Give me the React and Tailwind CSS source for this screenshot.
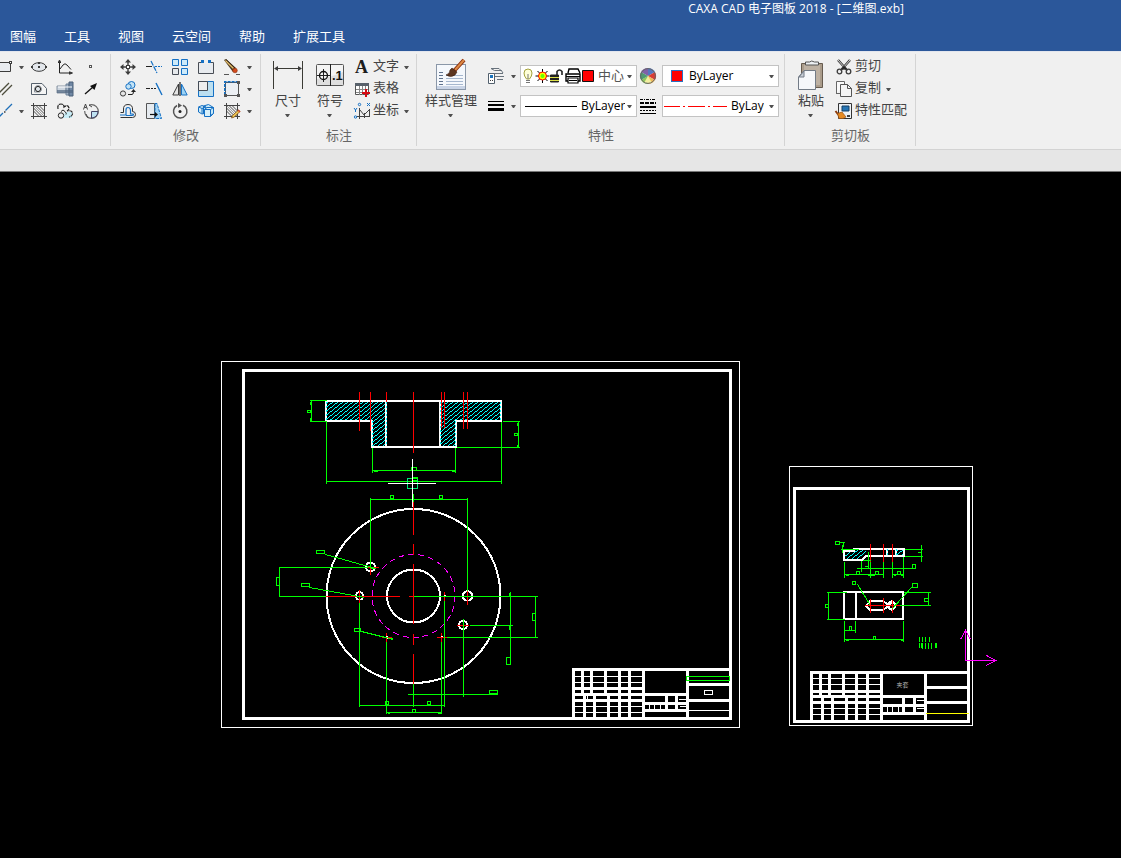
import React from "react";

const K = "#3c3c3c";
const B = "#1570c4";

function Icon({ children, className = "h-4 w-4", box = "0 0 16 16" }) {
  return (
    <svg viewBox={box} className={`shrink-0 overflow-visible ${className}`} fill="none" stroke={K} aria-hidden="true">
      {children}
    </svg>
  );
}

function Caret({ className = "" }) {
  return (
    <svg viewBox="0 0 5 3" className={`h-[3px] w-[5px] shrink-0 ${className}`} fill="#505050" aria-hidden="true">
      <path d="M0 0h5L3 3H2z" />
    </svg>
  );
}

/* ---------- tool icons ---------- */

const RectIcon = () => (
  <Icon className="h-4 w-3" box="4 0 12 16">
    <path d="M0 3.5h14.5v9H0" fill="#e8ebef" />
    <rect x="13" y="2" width="3" height="3" fill={K} stroke="none" />
    <rect x="14" y="3" width="1" height="1" fill="#fff" stroke="none" />
  </Icon>
);
const ParallelIcon = () => (
  <Icon className="h-4 w-3" box="4 0 12 16">
    <path d="M3 12 13 2M6 14 16 4" stroke="#4d4d3c" strokeWidth="1.3" />
  </Icon>
);
const CenterlineIcon = () => (
  <Icon className="h-4 w-3" box="4 0 12 16">
    <path d="M16 1 9.500 7.500M3 14l4-4" stroke="#1f6fb8" strokeWidth="1.3" />
    <path d="M8 9h1.500" stroke={K} strokeWidth="1.5" />
  </Icon>
);
const EllipseIcon = () => (
  <Icon>
    <ellipse cx="8" cy="8" rx="7" ry="4.300" fill="#e3e7ec" />
    <path d="M7 3h2v2H7zM7 7h2v2H7zM0 7h2v2H0zM14 7h2v2h-2z" fill={K} stroke="none" />
  </Icon>
);
const CurveIcon = () => (
  <Icon>
    <path d="M2.500 1v13H15M1 3.500h3M12.500 12.500v3M3 10 6 6q2-2.500 4 0l4 4.500" stroke="#222" />
    <path d="M1.500 3 2.500 1l1 2zM13 13l2.500 1L13 15z" fill="#222" />
  </Icon>
);
const PointIcon = () => (
  <Icon><rect x="6.500" y="6.500" width="2" height="2" fill="#fff" stroke="#555" /></Icon>
);
const ContourIcon = () => (
  <Icon>
    <path d="M.5 2.500h10.500l4.500 5v6H.5z" fill="#f4f4f4" stroke="#55606c" />
    <path d="M3.500 11V8A3.500 3.500 0 1 1 9 11z" stroke="#8a939c" />
    <circle cx="7" cy="8" r="2.600" fill="#dfe5ea" stroke="#222" />
  </Icon>
);
const ShaftIcon = () => (
  <Icon>
    <path d="M0 5h9v7H0z" fill="#ccd5df" stroke="#8794a3" />
    <path d="M9 3h3v11H9z" fill="#9eafc3" stroke="#6f8298" />
    <path d="M12 1h4v14h-4z" fill="#6f87a4" stroke="#4c6079" />
    <path d="M0 9h16v3H0z" fill="#50657f" stroke="none" opacity=".7" />
    <path d="M1 6h14" stroke="#fff" />
  </Icon>
);
const ArrowIcon = () => (
  <Icon>
    <path d="m2 13 8-7" stroke="#111" strokeWidth="1.300" />
    <path d="M14 2 11.500 9 7 5z" fill="#111" stroke="none" />
  </Icon>
);
const HatchIcon = ({ children }) => (
  <Icon>
    <path d="M0 2.500h16M0 13.500h16M2.500 0v16M13.500 0v16" stroke="#444" />
    <path d="m3 3 10 10M3 6l7 7M3 9l4 4M6 3l7 7M9 3l4 4M5 3l8 8M3 5l8 8M3 8l5 5M8 3l5 5" stroke="#8b8b8b" strokeWidth=".8" />
    {children}
  </Icon>
);
const SplineIcon = () => (
  <Icon>
    <path d="M8 9h7v6H6z" fill="#c9eef8" stroke="none" />
    <path d="M1 6Q0 1 4 1q3 0 3 3 4-3 5 1 0 2-2 3 5-1 5.500 2 .5 3-3.500 4" stroke="#222" strokeDasharray="4 .7" strokeWidth="1.200" />
    <path d="M4 8.500q2-3 4 0 2 2 1 3" stroke="#222" />
    <circle cx="4" cy="12.500" r="2.700" fill="#f0f0f0" stroke="#222" />
  </Icon>
);
const LocalIcon = () => (
  <Icon>
    <circle cx="8.500" cy="8.500" r="6.800" stroke="#666" strokeWidth="1.200" />
    <path d="M8.500 8.500h6.500a6.500 6.500 0 0 1-6.500 6.500z" fill="#bfe3f2" stroke="#446" />
    <path d="M0 0h6v8H0z" fill="#f0f0f0" stroke="none" />
    <path d="M.5 6.500 2.500 1l2 5.500M1.500 4.500h2M3 11l2 4M6 2l3 2" stroke="#444" />
  </Icon>
);
const MoveIcon = () => (
  <Icon>
    <path d="M8 0 5 3.500h6zM8 16l-3-3.500h6zM0 8l3.500-3v6zM16 8l-3.500-3v6z" fill={K} stroke="none" />
    <path d="M8 3v3M8 10v3M3 8h3M10 8h3" strokeWidth="1.400" />
    <rect x="6.500" y="6.500" width="3" height="3" fill="#fff" />
  </Icon>
);
const TrimIcon = () => (
  <Icon>
    <path d="m5 2 6 12" stroke={B} strokeWidth="1.200" strokeDasharray="5 1" />
    <path d="M0 7.500h6" stroke="#222" /><path d="M9 7.500h7" stroke={B} strokeDasharray="2 1" />
  </Icon>
);
const ExtendIcon = () => (
  <Icon>
    <path d="m10 2 6 12" stroke={B} strokeWidth="1.400" />
    <path d="M0 7.500h4" stroke="#222" /><path d="M5 7.500h6" stroke="#222" strokeDasharray="2 1" />
  </Icon>
);
const ArrayIcon = () => (
  <Icon>
    <path d="M.5.5h6v6h-6zM9.500.5h6v6h-6zM9.500 9.500h6v6h-6z" fill="#cdeafa" stroke={B} />
    <path d="M.5 9.500h6v6h-6z" fill="#e6e9ec" stroke="#454b55" />
  </Icon>
);
const BreakIcon = () => (
  <Icon>
    <path d="M.5 3.500h15v11H.5z" fill="#e8ebef" stroke="#484d55" />
    <path d="M6 2h5v3H6z" fill="#f0f0f0" stroke="none" />
    <path d="M3 1h3v3H3zM10 1h3v3h-3z" fill={B} stroke="none" />
  </Icon>
);
const EraserIcon = () => (
  <Icon>
    <path d="m0 1 2-1 10 9-3 4z" fill="#4b3820" stroke="none" />
    <path d="m1.500 1.500 8 8" stroke="#e3bd6b" strokeWidth="1.500" />
    <path d="M2 .5 11 9" stroke="#3a2a18" />
    <circle cx="11" cy="11.500" r="2.300" fill="#d44a1b" stroke="#8a2d0b" strokeWidth=".6" />
    <path d="M0 15.500h5M12 15.500h4" stroke="#555" />
  </Icon>
);
const CopyMoveIcon = () => (
  <Icon>
    <circle cx="11.500" cy="4" r="3.500" fill="#c3e3f5" stroke={B} />
    <circle cx="8.500" cy="5.500" r="2.700" fill="#c3e3f5" stroke={B} />
    <circle cx="3" cy="12.500" r="2.600" fill="#e6e6e6" />
    <path d="M8 13.500h4q1.500 0 1.500-3" stroke="#222" /><path d="m11 11 2.500-3 2.500 3z" fill="#222" stroke="none" />
  </Icon>
);
const MirrorIcon = () => (
  <Icon>
    <path d="M6.500 3v11H.8z" fill="#e4e4e4" /><path d="M8 1v14" strokeWidth="1.400" />
    <path d="M9.500 3v11h5.700z" fill="#9cd3f5" stroke={B} />
  </Icon>
);
const ScaleIcon = () => (
  <Icon>
    <path d="M.5.5h15v15H.5z" fill="#bcdff0" stroke={B} /><path d="M.5.5h9v9h-9z" fill="#eee" stroke="#444b55" />
  </Icon>
);
const StretchIcon = () => (
  <Icon>
    <path d="M1.500 1.500h13v13h-13z" fill="#eceff3" stroke="#555" />
    <path d="M.8 14V.8H15" stroke={B} strokeWidth="1.600" strokeDasharray="3 1" />
    <path d="M0 13h3v3H0zM13 0h3v3h-3zM13 13h3v3h-3z" fill="#555" stroke="none" />
  </Icon>
);
const OffsetIcon = () => (
  <Icon>
    <path d="M.5 9.500H3.500V7Q3 1.500 8 1.500T12.500 7v1.500q3 0 3 3t-3 3H.5" stroke="#333" />
    <path d="M0 12h6V7q0-2.500 2-2.500T10.500 7v4h2q1 0 1 .7t-2 .8H6" stroke={B} strokeWidth="1.200" />
  </Icon>
);
const ExtrudeIcon = () => (
  <Icon>
    <path d="M.5.5h8v15h-8z" fill="#e6ebf0" stroke="#555" />
    <path d="M9 .5h2l4.500 15H9z" fill="#9fd3f5" stroke={B} strokeDasharray="3 1" />
    <path d="M4 11.500h6" stroke="#111" strokeWidth="1.200" /><path d="m9 9 3 2.500L9 14z" fill="#111" stroke="none" />
  </Icon>
);
const RotateIcon = () => (
  <Icon>
    <path d="M5 2.500A6.700 6.700 0 1 0 11 2.300" stroke="#555" strokeWidth="1.500" />
    <path d="M6 0v5l4-2.500z" fill="#555" stroke="none" /><circle cx="8" cy="8.500" r="1.500" fill="#222" stroke="none" />
  </Icon>
);
const BlockIcon = () => (
  <Icon>
    <path d="M.5 4 4 2.500 8 4v6l-4 1L.5 9zM5.500 3l5-1.500 5 3v6l-3 2-7-2z" fill="#c7e8f7" stroke={B} />
    <path d="M6.500 6.500h6v7h-6zM.5 4 4 5.500V11M4 5.500 8 4M6.500 6.500 9 4.500l6.500 0-3 2M12.500 13.500l3-3" fill="#d8f0fa" stroke={B} />
  </Icon>
);
const HatchEditIcon = () => (
  <HatchIcon>
    <path d="M14.500 7 8.500 12.500 7.500 15l2.500-.8L16 8.500z" fill="#f6ce55" stroke="#7b4a16" strokeWidth=".8" />
    <path d="m14 7 2 2" stroke="#d24a2b" strokeWidth="1.500" />
  </HatchIcon>
);

/* ---------- annotation, properties and clipboard icons ---------- */

const DimensionIcon = () => (
  <Icon className="h-8 w-8" box="0 0 32 32">
    <path d="M1.500 2v28M30.500 2v28M3 9.500h26" stroke="#3b3b35" shapeRendering="crispEdges" />
    <path d="M2 9.500 6 7v5zM30 9.500 26 7v5z" fill={K} stroke="none" />
  </Icon>
);
const SymbolIcon = () => (
  <Icon className="h-8 w-8" box="0 0 32 32">
    <rect x="2.500" y="5.500" width="27" height="21" rx="1" fill="#dedede" stroke="#555" />
    <path d="M3 6h26v7q-14 6-26 7z" fill="#f4f4f4" stroke="none" />
    <path d="M16.500 5v22M3 16.500h13M9.500 10v13" stroke="#222" />
    <circle cx="9.500" cy="16.500" r="4" stroke="#111" strokeWidth="1.300" />
    <text x="18" y="21" fontSize="13" fontWeight="700" fontFamily="Liberation Sans, sans-serif" fill="#111" stroke="none">.1</text>
  </Icon>
);
const TextIcon = () => (
  <Icon>
    <text x="1" y="14" fontSize="18" fontWeight="700" fontFamily="Liberation Serif, serif" fill="#1c1c1c" stroke="none">A</text>
  </Icon>
);
const TableIcon = () => (
  <Icon>
    <path d="M1.500 2.500h13v11h-13z" fill="#fff" stroke="#555" /><path d="M1 2h14v3H1z" fill="#58616b" stroke="none" />
    <path d="M2 8.500h12M2 11.500h12M5.500 5v9M8.500 5v9M11.500 5v9" stroke="#888" />
    <path d="M12 8v8M8 12h8" stroke="#d40b13" strokeWidth="2" shapeRendering="crispEdges" />
  </Icon>
);
const CoordIcon = () => (
  <Icon>
    <path d="M5.500 5v11M3 13.500h13M6 7l4 5 5-5M10.500 15v-5M15.500 6v8" stroke="#444" />
    <path d="m0 5 1.500 2L3 5M1.500 7v2M13 0l3 3M16 0l-3 3" stroke={B} />
    <circle cx="5.500" cy="1.500" r="1.200" stroke={B} /><circle cx="1.500" cy="14" r="1.200" stroke={B} />
  </Icon>
);
const StyleIcon = () => (
  <Icon className="h-8 w-8" box="0 0 32 32">
    <rect x="1.500" y="5.500" width="29" height="25" fill="#f5f8fc" stroke="#8a97a8" />
    <path d="M2 27h28v3H2z" fill="#c9d4e6" stroke="none" />
    <path d="M4 13.500h4M4 16.500h4M4 19.500h4M4 22.500h4M4 25.500h4" stroke="#5f728d" />
    <path d="M11 16.500h17M11 19.500h17M11 22.500h17M11 25.500h17" stroke="#a6b7ce" />
    <path d="M29 1 19 12" stroke="#8a2f0f" strokeWidth="4" /><path d="M29 1 20 11" stroke="#dd8a45" strokeWidth="2" />
    <path d="m17 9 5 4-2 3q-4 3-9 0 4-1 4-5z" fill="#5c3520" stroke="#3d2012" strokeWidth=".6" />
  </Icon>
);
const LayerToolIcon = () => (
  <Icon>
    <path d="M3 .5h8l2 2H6.500zM6 5.500h9M7 8.500h9M9 11.500h6M13 2l2 3" stroke="#68727c" />
    <path d="M.5 5.500h6v10h-6z" fill="#fff" stroke="#52606d" /><path d="M2 7h3v3H2z" fill="#1973bd" stroke="none" />
    <path d="M2 12.500h1M4 12.500h1" />
  </Icon>
);
const LineWeightIcon = () => (
  <Icon><path d="M0 3h16v1H0zM0 6h16v2H0zM0 10h16v3H0z" fill="#000" stroke="none" shapeRendering="crispEdges" /></Icon>
);
const LineTypeIcon = () => (
  <Icon>
    <g stroke="#000" shapeRendering="crispEdges">
      <path d="M0 1.500h16" strokeDasharray="3 1 1 1" />
      <path d="M0 5h16" strokeWidth="2" strokeDasharray="4 1" /><path d="M0 9h16" strokeWidth="2" />
      <path d="M0 12.500h16" strokeDasharray="2 1" /><path d="M0 15.500h16" />
    </g>
  </Icon>
);
const ColorWheelIcon = () => (
  <Icon>
    <g stroke="none">
      <path d="M8 8V0a8 8 0 0 1 7 4z" fill="#5478c0" /><path d="M8 8 8 0a8 8 0 0 0-7 4z" fill="#8060a8" />
      <path d="M8 8 15 4a8 8 0 0 1 0 8z" fill="#d83c35" /><path d="M8 8 15 12a8 8 0 0 1-7 4z" fill="#edb95b" />
      <path d="M8 8v8a8 8 0 0 1-7-4z" fill="#8dc75d" /><path d="M8 8 1 12a8 8 0 0 1 0-8z" fill="#4f9a72" />
      <path d="M8 8 4 15h8z" fill="#f2eea0" />
    </g>
    <circle cx="8" cy="8" r="7.400" stroke="#666" />
  </Icon>
);
const LayerStateIcon = () => (
  <Icon className="h-4 w-[71px]" box="0 0 71 16">
    <path d="M3.500 11Q1 8 1 5q0-4 4-4t4 4q0 3-2.500 6z" fill="#ffffd8" stroke="#a3a13c" />
    <path d="M3 12.500h4M3 14.500h4M5 6v5" stroke="#777" />
    <path d="M19.500 1v14M12.500 8h14M14.500 3l10 10M24.500 3l-10 10" stroke="#000" />
    <circle cx="19.500" cy="8" r="4" fill="#ff0" stroke="#f00" /><circle cx="19.500" cy="8" r="2" fill="#6f0" stroke="none" />
    <path d="M27.500 7h8v7h-8z" fill="#222" stroke="#222" />
    <path d="M34 7V3.500q2.500-3 5 0V7" stroke="#222" strokeWidth="1.600" />
    <path d="M27 9.500h9M27 12.500h9" stroke="#dce14a" />
    <path d="M45 5 46 1h9l2 4M43 6h14v7H43z" fill="#fff" stroke="#000" strokeWidth="1.400" />
    <path d="M45 10h10v5H45z" fill="#fff" stroke="#000" strokeWidth="1.200" /><path d="M46 12.500h8M43 8.500h14" stroke="#000" />
    <path d="M59.500 2.500h11v11h-11z" fill="#f00" stroke="#111" />
  </Icon>
);
const PasteIcon = () => (
  <Icon className="h-8 w-8" box="0 0 32 32">
    <path d="M6.500 4.500h21v24h-21z" fill="#aa9c8b" stroke="#665b4f" />
    <path d="M9 6h16v20H9z" fill="#bdb1a3" stroke="none" />
    <path d="M10.500 6V3h4q2-2 5 0h4v3z" fill="#eceff2" stroke="#555" />
    <path d="M3.500 18 9 11.500h11.500v19h-17z" fill="#f5f7fa" stroke="#727b86" />
    <path d="M9 12v6H4z" fill="#c7cdd5" stroke="#727b86" />
  </Icon>
);
const CutIcon = () => (
  <Icon>
    <path d="m2 1 8 9M14 1l-8 9" stroke="#333" strokeWidth="2.400" /><path d="m2 1 7 8M14 1 7 9" stroke="#fff" strokeWidth=".8" />
    <circle cx="3.500" cy="12.500" r="2.300" strokeWidth="1.300" /><circle cx="12.500" cy="12.500" r="2.300" strokeWidth="1.300" />
    <path d="m4 11 4-4 4 4-4-1z" fill="#222" />
  </Icon>
);
const CopyIcon = () => (
  <Icon>
    <path d="M.5 13V.5h8V3" fill="#fafafa" stroke="#666" /><path d="M.5 12.500H4" stroke="#666" />
    <path d="M4.500 3.500h7l4 4v8h-11z" fill="#f5f5f5" stroke="#555" /><path d="M11.500 3.500v4h4" stroke="#555" />
  </Icon>
);
const MatchIcon = () => (
  <Icon>
    <path d="M2.500.5h13v15h-13z" fill="#eef2f6" stroke="#333" /><path d="M6 3h7v5H6z" fill="#2675b4" stroke="#143f63" />
    <path d="M11 12h3v2h-3z" fill="#444" stroke="none" />
    <path d="m-.5 8 3 4" stroke="#8c3b0b" strokeWidth="2" /><path d="M1.500 10.500 6 9l4 5-3 1.500H3z" fill="#e58a22" stroke="#9a5011" strokeWidth=".7" />
  </Icon>
);

/* ---------- ribbon parts ---------- */

function ToolButton({ label, children }) {
  return (
    <button type="button" aria-label={label} title={label} className="flex h-[22px] items-center justify-center">
      {children}
    </button>
  );
}

function Group({ title, className, children }) {
  return (
    <section className={`flex shrink-0 flex-col border-r border-[#d4d4d4] pt-0.5 ${className}`}>
      <div className="flex h-[66px]">{children}</div>
      <h2 className="mt-[3px] mb-px pl-px text-center leading-5 text-[#666]">{title || "\u00a0"}</h2>
    </section>
  );
}

function BigButton({ label, icon, className }) {
  return (
    <button type="button" className={`flex shrink-0 flex-col items-center pt-[3px] whitespace-nowrap ${className}`}>
      {icon}
      <span className="leading-[18px]">{label}</span>
      <Caret className="mt-[5px] mr-px" />
    </button>
  );
}

function RowButton({ label, icon, caret }) {
  return (
    <button type="button" className="flex h-[22px] items-center gap-[3px] whitespace-nowrap">
      {icon}
      <span className="pb-0.5">{label}</span>
      {caret && <Caret className="ml-0.5" />}
    </button>
  );
}

function Combo({ label, value, options, className = "", textClass = "mr-0.5 text-black", children }) {
  return (
    <div className={`flex h-[22px] w-[117px] items-center border border-[#c3c3c3] bg-white pr-1 pl-0.5 ${className}`}>
      {children}
      <select aria-label={label} defaultValue={value} className={`min-w-0 flex-1 appearance-none overflow-hidden bg-transparent pl-1 outline-none ${textClass}`}>
        {options.map((o) => <option key={o}>{o}</option>)}
      </select>
      <Caret />
    </div>
  );
}

function Ribbon() {
  return (
    <div className="flex overflow-hidden border-t border-b border-t-[#e3e6ee] border-b-[#d3d3d3] bg-[#f0f0f0] pt-0.5 pb-[3px] text-[13px] text-[#444]">
      <Group className="w-[111px]">
        <div className="grid grid-cols-[12px_14px_26px_26px_26px]">
          <ToolButton label="矩形"><RectIcon /></ToolButton>
          <ToolButton label="矩形选项"><Caret className="ml-1" /></ToolButton>
          <ToolButton label="椭圆"><EllipseIcon /></ToolButton>
          <ToolButton label="公式曲线"><CurveIcon /></ToolButton>
          <ToolButton label="点"><PointIcon /></ToolButton>
          <ToolButton label="平行线"><ParallelIcon /></ToolButton>
          <span />
          <ToolButton label="轮廓"><ContourIcon /></ToolButton>
          <ToolButton label="孔/轴"><ShaftIcon /></ToolButton>
          <ToolButton label="箭头"><ArrowIcon /></ToolButton>
          <ToolButton label="中心线"><CenterlineIcon /></ToolButton>
          <ToolButton label="中心线选项"><Caret className="ml-1" /></ToolButton>
          <ToolButton label="剖面线"><HatchIcon /></ToolButton>
          <ToolButton label="云线"><SplineIcon /></ToolButton>
          <ToolButton label="局部放大"><LocalIcon /></ToolButton>
        </div>
      </Group>

      <Group title="修改" className="w-[150px]">
        <div className="grid grid-cols-[26px_26px_26px_26px_26px_8px] pl-1">
          <ToolButton label="平移"><MoveIcon /></ToolButton>
          <ToolButton label="裁剪"><TrimIcon /></ToolButton>
          <ToolButton label="阵列"><ArrayIcon /></ToolButton>
          <ToolButton label="打断"><BreakIcon /></ToolButton>
          <ToolButton label="删除"><EraserIcon /></ToolButton>
          <ToolButton label="删除选项"><Caret /></ToolButton>
          <ToolButton label="平移复制"><CopyMoveIcon /></ToolButton>
          <ToolButton label="延伸"><ExtendIcon /></ToolButton>
          <ToolButton label="镜像"><MirrorIcon /></ToolButton>
          <ToolButton label="缩放"><ScaleIcon /></ToolButton>
          <ToolButton label="分解"><StretchIcon /></ToolButton>
          <ToolButton label="分解选项"><Caret /></ToolButton>
          <ToolButton label="等距线"><OffsetIcon /></ToolButton>
          <ToolButton label="拉伸"><ExtrudeIcon /></ToolButton>
          <ToolButton label="旋转"><RotateIcon /></ToolButton>
          <ToolButton label="块"><BlockIcon /></ToolButton>
          <ToolButton label="剖面线编辑"><HatchEditIcon /></ToolButton>
          <ToolButton label="剖面线编辑选项"><Caret /></ToolButton>
        </div>
      </Group>

      <Group title="标注" className="w-[156px]">
        <BigButton className="ml-1.5 w-[42px]" label="尺寸" icon={<DimensionIcon />} />
        <BigButton className="w-[42px]" label="符号" icon={<SymbolIcon />} />
        <div className="ml-[3px]">
          <RowButton label="文字" icon={<TextIcon />} caret />
          <RowButton label="表格" icon={<TableIcon />} />
          <RowButton label="坐标" icon={<CoordIcon />} caret />
        </div>
      </Group>

      <Group title="特性" className="w-[368px]">
        <BigButton className="ml-2 w-[52px]" label="样式管理" icon={<StyleIcon />} />
        <div className="ml-[11px] grid grid-cols-[16px_16px_117px_22px_120px] content-start items-center gap-y-2 pt-[9px] text-[12px]">
          <ToolButton label="图层工具"><LayerToolIcon /></ToolButton>
          <ToolButton label="图层工具选项"><Caret className="ml-0.5" /></ToolButton>
          <Combo label="图层" value="中心" options={["中心"]} textClass="text-[13px] text-[#555]"><LayerStateIcon /></Combo>
          <ToolButton label="颜色"><ColorWheelIcon /></ToolButton>
          <Combo label="颜色设置" value="ByLayer" options={["ByLayer"]} className="justify-self-end">
            <span className="mr-0.5 ml-1.5 h-3 w-3 shrink-0 border border-[#2b70c0] bg-[#f00]" />
          </Combo>
          <ToolButton label="线宽"><LineWeightIcon /></ToolButton>
          <ToolButton label="线宽选项"><Caret className="ml-0.5" /></ToolButton>
          <Combo label="线宽设置" value="ByLayer" options={["ByLayer"]}>
            <span className="ml-0.5 h-px w-[52px] shrink-0 bg-black" />
          </Combo>
          <ToolButton label="线型"><LineTypeIcon /></ToolButton>
          <Combo label="线型设置" value="ByLayer" options={["ByLayer"]} className="justify-self-end" textClass="mr-[5px] text-black">
            <svg viewBox="0 0 63 1" className="-ml-px h-px w-[63px] shrink-0" aria-hidden="true">
              <path d="M0 .5h16M19 .5h2M24 .5h17M44 .5h2M49 .5h14" stroke="#f00" />
            </svg>
          </Combo>
        </div>
      </Group>

      <Group title="剪切板" className="w-[131px]">
        <BigButton className="ml-1.5 w-10" label="粘贴" icon={<PasteIcon />} />
        <div className="ml-[5px]">
          <RowButton label="剪切" icon={<CutIcon />} />
          <RowButton label="复制" icon={<CopyIcon />} caret />
          <RowButton label="特性匹配" icon={<MatchIcon />} />
        </div>
      </Group>
    </div>
  );
}

/* ---------- drawing ---------- */

const discBoxes = [
  [307, 410, 3, 2], [514, 433, 3, 2], [411, 467, 5, 3], [390, 495, 3, 3], [439, 495, 3, 3],
  [276, 577, 3, 8], [316, 550, 8, 3], [301, 583, 8, 3], [354, 628, 6, 3], [489, 690, 8, 3],
  [385, 701, 3, 3], [427, 701, 3, 3], [412, 709, 3, 3], [506, 657, 4, 7], [532, 613, 3, 7],
];
const blockBoxes = [
  [835, 541, 4, 3], [856, 571, 3, 3], [875, 571, 3, 3], [897, 571, 3, 3], [912, 564, 3, 4],
  [825, 604, 3, 3], [924, 598, 4, 3], [852, 581, 3, 3], [912, 583, 5, 4], [849, 626, 2, 4],
  [873, 636, 2, 3],
];

const Boxes = ({ items }) =>
  items.map(([x, y, w, h]) => <rect key={`${x}-${y}`} x={x} y={y} width={w} height={h} />);

function TitleBlock({ x, y, upper, lower, rows }) {
  return (
    <g transform={`translate(${x} ${y})`}>
      <g strokeWidth="3">
        {upper.map((c) => <path key={`u${c}`} d={`M${c} 0V25`} />)}
        {lower.map((c) => <path key={`l${c}`} d={`M${c} 25V49`} />)}
        <path d={`M0 50V0H158M70 0V49M114 0V49M0 19H70`} />
        {rows.thick.map((r) => <path key={r} d={r} />)}
      </g>
      {rows.thin.map((r) => <path key={r} d={r} />)}
    </g>
  );
}

function Drawing() {
  return (
    <svg
      viewBox="0 172 1121 686"
      preserveAspectRatio="xMidYMin meet"
      className="min-h-0 w-full flex-1 bg-black"
      fill="none"
      shapeRendering="crispEdges"
      role="img"
      aria-label="二维图"
    >
      <defs>
        <pattern id="hatch" width="5" height="4" patternUnits="userSpaceOnUse">
          <path d="M0 3h2v1H0zM2 2h1v1H2zM3 1h1v1H3zM4 0h1v1H4z" fill="#0ff" />
        </pattern>
      </defs>

      {/* hatched sections */}
      <path d="M326 401h60v46h-14v-26h-46zM440 401h61v20h-45v26h-16z" fill="url(#hatch)" />
      <path d="M844 552l10-3h12v6l-5 5h-17zM895 549h9v7h-9z" fill="url(#hatch)" />

      {/* two-pixel outlines */}
      <g stroke="#fff" strokeWidth="2">
        <path d="M326 401H501V421H456V447H372V421H326ZM386 401V447M440 401V447" />
        <path d="M844 561V551H854V549H904V556H866L862 560H844M887 549V556M896 549V556" />
        <path d="M844 592H903V619H844ZM856 592V619" />
        <path d="M870 601H883L887 604 892 601 896 605 892 610 887 607 883 610H870L866 606Z" />
        <circle cx="892" cy="606" r="3" />
        <circle cx="413.500" cy="596" r="87" />
        <circle cx="413.500" cy="596" r="26.500" />
        <circle cx="370.500" cy="567" r="4.500" /><circle cx="359.500" cy="596" r="3.700" />
        <circle cx="467.500" cy="596" r="4.700" /><circle cx="463" cy="625" r="4" />
      </g>
      <path d="M326.500 402V421M386.500 402V446M440.500 402V446M500.500 402V421M372.500 421V446M455.500 421V446M887.500 549V556M896.500 549V556" stroke="#0ff" strokeDasharray="2 2" />
      <circle cx="413.500" cy="596" r="41.500" stroke="#f0f" strokeDasharray="6 4" />

      <g transform="translate(.5 .5)">
        {/* sheet frames */}
        <g stroke="#fff">
          <path d="M221 361H739V727H221ZM789 466H972V725H789Z" />
          <path d="M243 370H730V718H243ZM794 488H968V721H794Z" strokeWidth="3" />
        </g>

        {/* centre lines */}
        <g stroke="#f00">
          <path d="M359 391V430M370 391V430M386 391V401M413 391V452M441 391V427M444 391V427M463 391V428M467 391V428" />
          <path d="M413 500V534M413 543V554M413 563V623M413 633V644M413 653V683M325 596H399M408 596H414" />
          <path d="M362 567H378M370 560V574M359 589V602M467 590V604M456 625H468M463 618V630M381 637H391M386 632V641M436 637H446M441 632V641M444 591V600" />
          <path d="M870 543V561M883 543V561M892 543V561M864 605H899M870 598V612M883 597V612M892 599V612" />
        </g>

        {/* dimensions */}
        <g stroke="#0f0">
          <path d="M309 400H326M309 421H326M311 400V421M310 401V404M310 417V421" />
          <path d="M502 421H519M456 447H519M518 421V447M517 422V425M517 444V447" />
          <path d="M326 421V483M501 421V483M372 447V472M455 447V472M372 470H455M373 471H377M451 471H455M326 481H501" />
          <path d="M370 499H467M370 497V567M467 497V590M413 493V501" />
          <path d="M279 567V596M278 567H367M278 596H325M413 596H537M535 596V637M446 637H537" />
          <path d="M510 591V664M509 592V596M509 625V629M469 625H512M325 554 375 568M370 568H375M309 587 364 597M361 631 393 639M387 638H392" />
          <path d="M359 602V706M386 641V713M441 641V713M444 600V706M413 683V706M463 618V696M359 705H444M386 712H441M387 713H389M437 713H440M407 694H497" />
          <Boxes items={discBoxes} />
          <path d="M839 542H844M842 544V552M843 542V546M840 549H858M844 561V577M844 574H883M892 574H903M870 561V577M883 561V577M892 561V577M903 556V577" />
          <path d="M845 575H848M867 575H874M893 575H895M900 575H903M856 568H915M868 551V567M864 566H868M861 560V571M862 560H870" />
          <path d="M904 549H922M904 556H922M921 544V561M917 552H921" />
          <path d="M826 592H846M826 619H844M828 592V619M903 592H930M899 605H930M928 592V605M857 584 870 605M911 587 891 609" />
          <path d="M844 620V641M855 620V632M844 630H855M903 620V641M844 639H903M845 640H848M900 640H903" />
          <path d="M919 636V641M922 636V641M925 636V641M929 636V641M919 642V647M922 642V648M925 642V648M928 642V648M931 642V648M935 642V647" />
          <path d="M921 642V647M936 642V647" />
          <Boxes items={blockBoxes} />
        </g>
        <path d="M387 638V637M385 636H387M440 636H442M443 595H445" stroke="#fff" />

        {/* title blocks */}
        <g stroke="#fff">
          <TitleBlock
            x={573} y={669}
            upper={[9, 18, 32, 46, 56]} lower={[11, 21, 35, 46, 56]}
            rows={{
              thick: ["M0 25H114", "M0 31H70", "M70 34H114", "M70 41H114", "M93 25V41", "M103 25V41", "M114 15H157", "M114 31H157"],
              thin: ["M0 7H70", "M0 13H70", "M0 37H70", "M0 43H70", "M76 34V40", "M81 34V40", "M87 34V40", "M105 30H113", "M106 37H112", "M114 41H157", "M14 26V29"],
            }}
          />
          <rect x="704" y="690" width="8" height="4" />
          <TitleBlock
            x={811} y={672}
            upper={[9, 18, 32, 45, 56]} lower={[11, 21, 35, 45, 56]}
            rows={{
              thick: ["M0 24H113", "M0 30H70", "M70 33H113", "M70 41H113", "M92 25V41", "M103 25V41", "M114 15H157", "M114 30H157"],
              thin: ["M0 6H70", "M0 12H70", "M0 36H70", "M0 42H70", "M76 34V40", "M81 34V40", "M87 34V40", "M105 28H112", "M105 36H112"],
            }}
          />
        </g>
        <rect x="686" y="676" width="43" height="4" stroke="#0f0" />
        <path d="M925 713H968" stroke="#ff0" />
        <text x="896" y="686" fontSize="6" fontFamily="Noto Sans CJK SC, sans-serif" fill="#b5b5b5">夹套</text>

        {/* coordinate axes */}
        <path d="M965 660V631M960 639 965 630 970 639M965 660H995M986 655 995 660 986 665" stroke="#f0f" />

        {/* cursor */}
        <rect x="407" y="478" width="10" height="10" stroke="#00e878" />
        <path d="M410 478H417M412 480H416M411 477H417" stroke="#0f0" />
        <path d="M412 458V506M387 483H435" stroke="#fff" />
      </g>
    </svg>
  );
}

const menus = ["图幅", "工具", "视图", "云空间", "帮助", "扩展工具"];

export default function App() {
  return (
    <div className="flex h-screen min-h-[500px] flex-col overflow-hidden bg-black font-['Open_Sans','Noto_Sans_CJK_SC',sans-serif] text-[13px]">
      <header className="bg-[#2b579a] text-white">
        <h1 className="pr-[217px] text-right text-[12px] leading-[18px]">CAXA CAD 电子图板 2018 - [二维图.exb]</h1>
        <nav className="flex h-[33px] items-center gap-7 px-2.5 pt-0.5">
          {menus.map((m) => <a key={m} href="#" className="whitespace-nowrap leading-5">{m}</a>)}
        </nav>
      </header>
      <Ribbon />
      <div className="h-[22px] shrink-0 border-b border-[#777] bg-[#e6e6e6]" />
      <Drawing />
    </div>
  );
}
